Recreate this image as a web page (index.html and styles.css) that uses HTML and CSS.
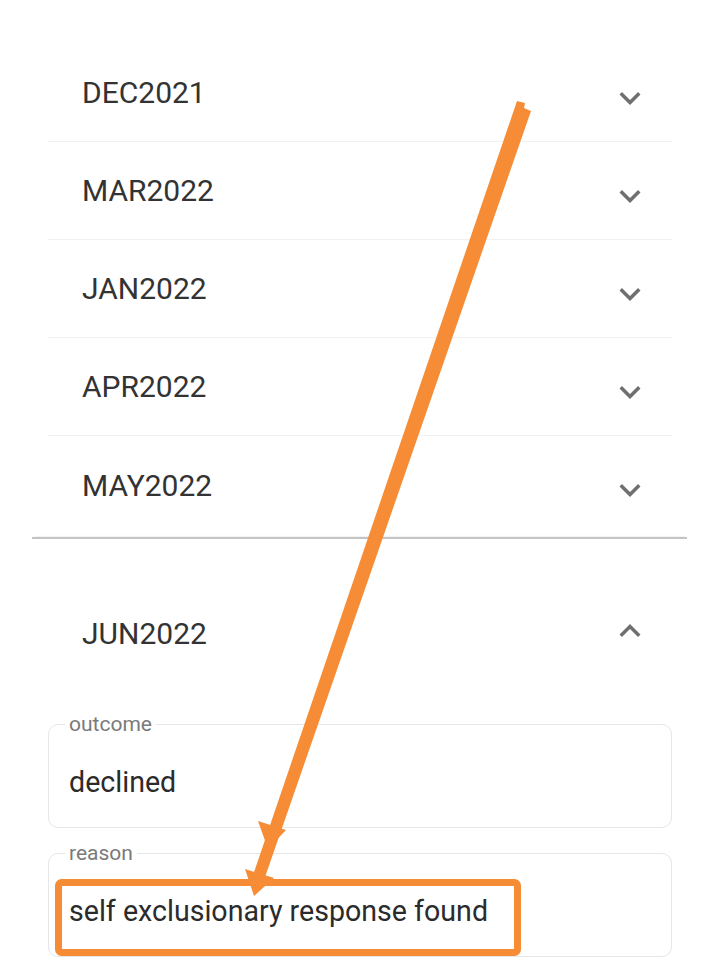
FILE: index.html
```html
<!doctype html>
<html>

<head>
	<title>Decisions</title>
	<link rel="stylesheet" href="styles.css">
</head>

<body>
	<div id='page'>
		<div id='panel-list'>
			<div class='panel-row'>
				<span class='panel-title'>DEC2021</span>
				<svg class='chevron' viewBox='0 0 24 24'><path d='M16.59 8.59L12 13.17 7.41 8.59 6 10l6 6 6-6z'/></svg>
			</div>
			<div class='panel-row'>
				<span class='panel-title'>MAR2022</span>
				<svg class='chevron' viewBox='0 0 24 24'><path d='M16.59 8.59L12 13.17 7.41 8.59 6 10l6 6 6-6z'/></svg>
			</div>
			<div class='panel-row'>
				<span class='panel-title'>JAN2022</span>
				<svg class='chevron' viewBox='0 0 24 24'><path d='M16.59 8.59L12 13.17 7.41 8.59 6 10l6 6 6-6z'/></svg>
			</div>
			<div class='panel-row'>
				<span class='panel-title'>APR2022</span>
				<svg class='chevron' viewBox='0 0 24 24'><path d='M16.59 8.59L12 13.17 7.41 8.59 6 10l6 6 6-6z'/></svg>
			</div>
			<div class='panel-row last'>
				<span class='panel-title'>MAY2022</span>
				<svg class='chevron' viewBox='0 0 24 24'><path d='M16.59 8.59L12 13.17 7.41 8.59 6 10l6 6 6-6z'/></svg>
			</div>
		</div>

		<div id='panel-open'>
			<div class='panel-head'>
				<span class='panel-title'>JUN2022</span>
				<svg class='chevron up' viewBox='0 0 24 24'><path d='M12 8l-6 6 1.41 1.41L12 10.83l4.59 4.58L18 14z'/></svg>
			</div>
			<div class='panel-body'>
				<fieldset class='field'>
					<legend>outcome</legend>
					<div class='field-value'>declined</div>
				</fieldset>
				<fieldset class='field'>
					<legend>reason</legend>
					<div class='field-value'>self exclusionary response found</div>
				</fieldset>
			</div>
		</div>

		<!-- hand drawn annotation on top of the screenshot -->
		<svg id='annotation' viewBox='0 0 719 980'>
			<rect x='58.5' y='882.5' width='459' height='70' rx='3' fill='none' stroke='#f68d36' stroke-width='7'/>
			<polygon fill='#f68d36' points='517,101 525,103 524,108 531,111 264,880 252,878'/>
			<polygon fill='#f68d36' points='258,821 286,830 268,849'/>
			<polygon fill='#f68d36' points='245,869 274,878 254,896'/>
		</svg>
	</div>
</body>

</html>
```

FILE: styles.css
```css
html, body {
	margin: 0;
	padding: 0;
	background-color: #fff;
	font-family: Roboto, 'Noto Sans', sans-serif;
	color: #333;
}

#page {
	position: relative;
	width: 719px;
	height: 980px;
	overflow: hidden;
}

#panel-list {
	padding: 44px 47px 0 48px;
}

.panel-row {
	display: flex;
	align-items: center;
	justify-content: space-between;
	height: 97px;
	padding: 0 21px 0 34px;
	border-bottom: 1px solid #f1f1f1;
}
.panel-row.last {
	border-bottom: none;
	height: 98px;
}

.panel-title {
	font-size: 30px;
	letter-spacing: 0;
}

.chevron {
	width: 42px;
	height: 42px;
	margin-top: 10px;
	fill: #6f6f6f;
}
.chevron.up {
	margin-top: -4px;
}

#panel-open {
	margin: 3px 32px 0 32px;
	border-top: 2px solid #c4c4c4;
	box-shadow: 0 -2px 2px -2px rgba(0,0,0,0.15);
	padding: 0 15px 0 16px;
}

.panel-head {
	display: flex;
	align-items: center;
	justify-content: space-between;
	height: 48px;
	padding: 70px 21px 55px 34px;
}

.panel-body {
	display: flex;
	flex-direction: column;
	gap: 13px;
}

.field {
	margin: 0;
	padding: 0 20px 27px 20px;
	border: 1px solid #e6e6e6;
	border-radius: 10px;
}
.field legend {
	padding: 0 4px;
	margin-left: -4px;
	font-size: 21px;
	line-height: 24px;
	color: #7a7a7a;
}
.field-value {
	margin-top: 28px;
	font-size: 28.6px;
	line-height: 36px;
	color: #2b2b2b;
}

#annotation {
	position: absolute;
	top: 0;
	left: 0;
	width: 719px;
	height: 980px;
	pointer-events: none;
}
```
